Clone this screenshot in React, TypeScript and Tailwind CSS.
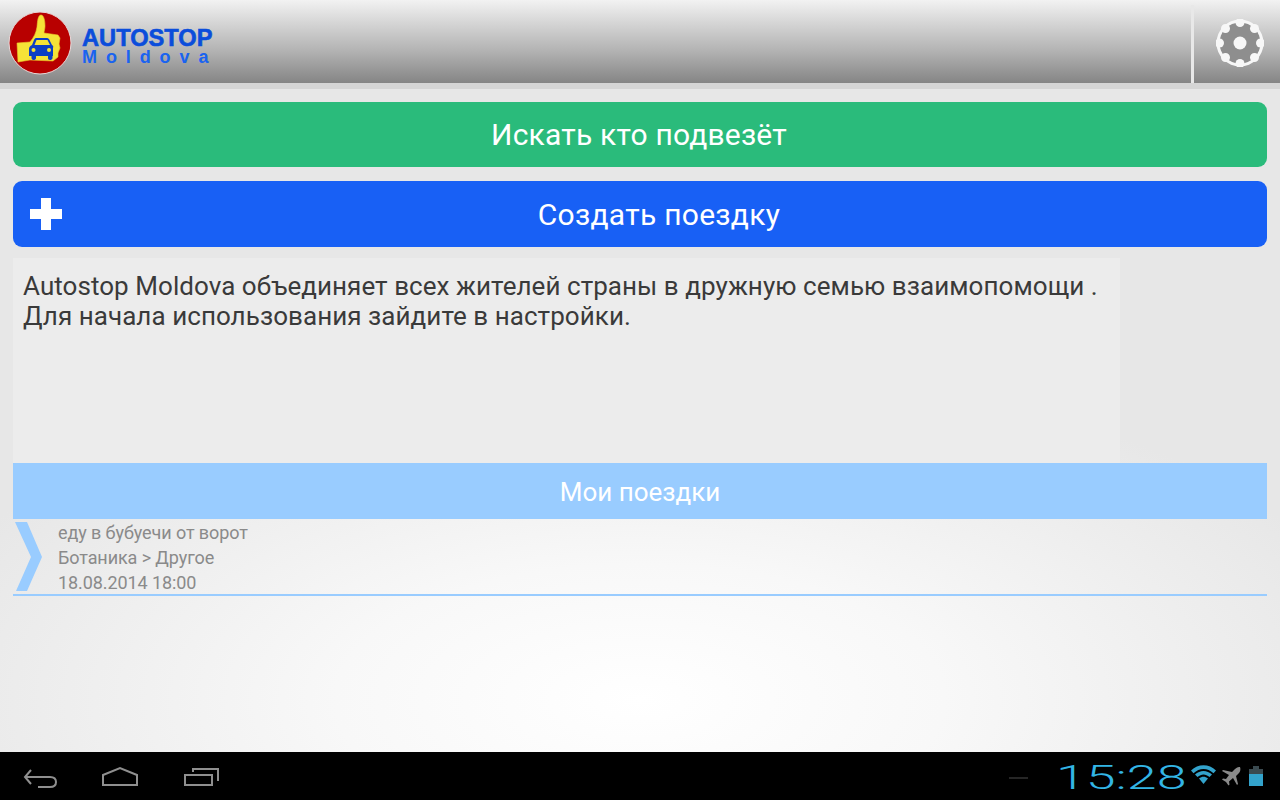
import React from "react";

function Logo() {
  return (
    <svg width="64" height="64" viewBox="0 0 64 64" className="shrink-0">
      <circle cx="32" cy="32" r="31" fill="#b80000" stroke="#e8d8d8" strokeWidth="1" />
      <path d="M9 32L22 31C26 26 28 22 29 16C29.5 10 30 4 33 4C36 4 37 10 37 15C37 18 36 20 36 22L50 24L52 27L51 33L52 37L50 42L50 46L45 50L22 49L10 51Z" fill="#f5e337" stroke="#e9c82a" strokeWidth="0.6" />
      <g transform="translate(-5 1)">
        <path d="M33 26 L44 26 C45.5 26 46 27 46.5 28 L49 33 C51 34 50 35 50 37 L50 44 L49.5 44 L49.5 46 C49.5 47.5 48 48 47 48 C45.5 48 45 47 45 46 L45 44 L33 44 L33 46 C33 47.5 31.5 48 30.5 48 C29.5 48 28.5 47 28.5 46 L28.5 44 L26 44 L26 37 C26 35 27 34 29 33 L31 28 C31.5 27 32 26 33 26 Z" fill="#0b3fc4" />
        <path d="M33.5 28 L44.5 28 L47 33 L31.5 33 Z" fill="#f5e337" />
        <circle cx="30.5" cy="38" r="2" fill="#f5e337" />
        <circle cx="46" cy="38" r="2" fill="#f5e337" />
      </g>
    </svg>
  );
}

function Gear() {
  const notches = [0, 45, 90, 135, 180, 225, 270, 315];
  return (
    <svg width="48" height="48" viewBox="0 0 48 48">
      <circle cx="24" cy="24" r="23.5" fill="#f7f7f7" />
      <circle cx="24" cy="24" r="20.5" fill="#8e8e8e" />
      {notches.map((a) => (
        <circle key={a} cx="24" cy="3.5" r="4.5" fill="#f7f7f7" transform={`rotate(${a} 24 24)`} />
      ))}
      <circle cx="24" cy="24" r="6.5" fill="#f7f7f7" />
    </svg>
  );
}

export default function App() {
  return (
    <div className="w-[1280px] h-[800px] overflow-hidden flex flex-col font-['Roboto',sans-serif] bg-[radial-gradient(ellipse_760px_340px_at_640px_700px,#ffffff_0%,#f8f8f8_40%,#e7e7e7_100%)]">
      <header className="h-[83px] flex items-stretch bg-[linear-gradient(#f2f2f2_0%,#d8d8d8_25%,#b4b4b4_60%,#858585_100%)]">
        <div className="ml-[8px] mt-[11px]">
          <Logo />
        </div>
        <div className="ml-[10px] mt-[27px] flex flex-col font-['Liberation_Sans',sans-serif] font-bold">
          <span className="text-[24px] leading-[22px] text-[#0b4ddb] scale-x-[0.985] origin-left [-webkit-text-stroke:0.6px_#0b4ddb]">AUTOSTOP</span>
          <span className="text-[18px] leading-[17px] tracking-[8.9px] text-[#1a63f0]">Moldova</span>
        </div>
        <div className="ml-auto mt-[5px] w-[3px] bg-[#e8e8e8]" />
        <div className="w-[86px] pt-[19px] pl-[22px]">
          <Gear />
        </div>
      </header>
      <div className="h-[6px] bg-[#d5d5d5]" />

      <main className="flex-1 px-[13px] pt-[13px] flex flex-col">
        <button className="h-[65px] w-full rounded-[9px] bg-[#2abb7b] text-white text-[30px] leading-none tracking-[0.2px] flex items-center justify-center">
          <span className="-ml-[2px]">Искать кто подвезёт</span>
        </button>
        <button className="relative mt-[14px] h-[66px] w-full rounded-[9px] bg-[#1860f5] text-white text-[30px] leading-none tracking-[0.27px] flex items-center justify-center">
          <svg width="32" height="32" viewBox="0 0 32 32" className="absolute left-[17px] top-[17px]">
            <path d="M11 0H21V11H32V21H21V32H11V21H0V11H11Z" fill="#ffffff" />
          </svg>
          <span className="ml-[38px] mt-[2px]">Создать поездку</span>
        </button>
        <div className="mt-[11px] h-[205px] w-[1107px] bg-[#ececec] pl-[10px] pt-[13px] text-[26px] leading-[30px] tracking-[0.055px] text-[#3a3a3a]">
          <p>Autostop Moldova объединяет всех жителей страны в дружную семью взаимопомощи .</p>
          <p>Для начала использования зайдите в настройки.</p>
        </div>
        <div className="h-[56px] pt-[3px] bg-[#99ccff] text-white text-[26px] flex items-center justify-center">Мои поездки</div>
        <div className="h-[77px] border-b-2 border-[#99ccff] flex">
          <svg width="30" height="70" viewBox="0 0 30 70" className="ml-[2px] mt-[3px] shrink-0">
            <path d="M0 0H12L27 35L12 69H1L16 35Z" fill="#99ccff" />
          </svg>
          <div className="ml-[13px] text-[18px] leading-[25px] tracking-[-0.09px] text-[#8a8a8a] pt-[1px]">
            <div>еду в бубуечи от ворот</div>
            <div>Ботаника &gt; Другое</div>
            <div>18.08.2014 18:00</div>
          </div>
        </div>
      </main>

      <footer className="h-[48px] bg-black flex items-center relative">
        <svg width="240" height="48" viewBox="0 0 240 48" className="absolute left-0 top-0" fill="none" stroke="#8f8f8f" strokeWidth="2">
          <path d="M31 18L25 25L31 32" />
          <path d="M25 25H50C54 25 56 27 56 30C56 33 54 35 50 35H38" />
          <path d="M103 33V23L120 16L137 23V33H103Z" />
          <path d="M185 23H212V33H185Z" />
          <path d="M193 20V17H218V29" />
        </svg>
        <div className="absolute left-[1009px] top-[25px] w-[19px] h-[2px] bg-[#262626]" />
        <div className="absolute left-[1056px] top-[5px] origin-left scale-x-[1.58] text-[34px] leading-[40px] font-light text-[#33b5e5]">15:28</div>
        <svg width="90" height="24" viewBox="0 0 90 24" className="absolute left-[1190px] top-[12px]">
          <path d="M1 6.5C8 -0.5 19 -0.5 26 6.5L23.5 9.2C17.5 3.5 9.5 3.5 3.5 9.2Z" fill="#33a3cc" />
          <path d="M5 10.5C10 5.8 17 5.8 22 10.5L19.5 13C15.5 9.5 11.5 9.5 7.5 13Z" fill="#33a3cc" />
          <path d="M9 14.5C12 12 15 12 18 14.5L13.5 20Z" fill="#33a3cc" />
          <path d="M50 3C48 2.5 46 4 45 5L42 8L33 6L32 7L39 11L36 15L33 14.5L32 15.5L36 18L38.5 21.5L39.5 20.5L39 17.5L43 14L47 21L48 20L46 12L49 9C50 8 51 5 50 3Z" fill="#8a8a8a" />
          <rect x="59" y="5" width="14" height="17" fill="#33a3cc" />
          <rect x="59" y="5" width="14" height="5" fill="#3a4a50" />
          <rect x="63" y="2" width="6" height="3" fill="#3a4a50" />
        </svg>
      </footer>
    </div>
  );
}
